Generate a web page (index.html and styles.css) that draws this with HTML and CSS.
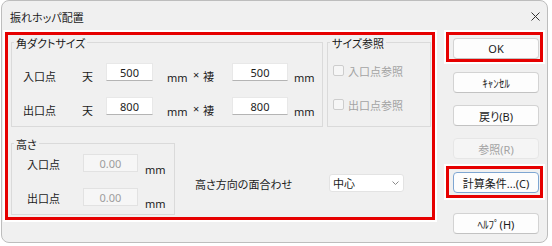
FILE: index.html
```html
<!DOCTYPE html>
<html lang="ja">
<head>
<meta charset="UTF-8">
<title>振れホッパ配置</title>
<link rel="stylesheet" href="styles.css">
</head>
<body>

<div class="window">
    <div class="titlebar">
        <span class="title">振れホッパ配置</span>
        <svg class="close" width="9" height="9" viewBox="0 0 9 9"><path d="M0.5 0.5L8.5 8.5M8.5 0.5L0.5 8.5" stroke="#333" stroke-width="1" fill="none"/></svg>
    </div>

    <div class="client">
        <div class="main">
            <div class="top">
                <div class="group duct">
                    <div class="group-title">角ダクトサイズ</div>
                    <div class="row">
                        <span class="lbl">入口点</span>
                        <span class="ten">天</span>
                        <input class="num w1" value="500">
                        <span class="unit u1">mm</span>
                        <span class="times">×</span>
                        <span class="tsuma">褄</span>
                        <input class="num w2" value="500">
                        <span class="unit u2">mm</span>
                    </div>
                    <div class="row">
                        <span class="lbl">出口点</span>
                        <span class="ten">天</span>
                        <input class="num w1" value="800">
                        <span class="unit u1">mm</span>
                        <span class="times">×</span>
                        <span class="tsuma">褄</span>
                        <input class="num w2" value="800">
                        <span class="unit u2">mm</span>
                    </div>
                </div>
                <div class="group ref">
                    <div class="group-title">サイズ参照</div>
                    <div class="chk"><span class="box"></span><span class="chk-text">入口点参照</span></div>
                    <div class="chk"><span class="box"></span><span class="chk-text">出口点参照</span></div>
                </div>
            </div>
            <div class="bottom">
                <div class="group height">
                    <div class="group-title">高さ</div>
                    <div class="hrow">
                        <span class="lbl">入口点</span>
                        <input class="num dis" value="0.00" disabled>
                        <span class="unit">mm</span>
                    </div>
                    <div class="hrow">
                        <span class="lbl">出口点</span>
                        <input class="num dis" value="0.00" disabled>
                        <span class="unit">mm</span>
                    </div>
                </div>
                <div class="align">
                    <span class="align-lbl">高さ方向の面合わせ</span>
                    <div class="select">
                        <span>中心</span>
                        <svg width="7" height="4" viewBox="0 0 7 4"><polyline points="0.5,0.5 3.5,3.5 6.5,0.5" stroke="#8a8a8a" stroke-width="1" fill="none"/></svg>
                    </div>
                </div>
            </div>
        </div>

        <div class="buttons">
            <div class="mark mark-ok"><button class="btn">OK</button></div>
            <button class="btn plain cancel">ｷｬﾝｾﾙ</button>
            <button class="btn plain back">戻り(B)</button>
            <button class="btn plain disabled refbtn" disabled>参照(R)</button>
            <div class="mark mark-calc"><button class="btn focus">計算条件...(C)</button></div>
            <button class="btn plain help">ﾍﾙﾌﾟ(H)</button>
        </div>
    </div>
</div>

</body>
</html>
```

FILE: styles.css
```css
body { margin: 0; background: #fff; font-family: "Noto Sans", "Noto Sans CJK JP", sans-serif; font-size: 11px; color: #1b1b1b; font-feature-settings: "palt"; }

.window { box-sizing: border-box; width: 547px; height: 243px; margin-left: 1px; border: 1px solid #bdbdbd; border-radius: 8px; background: #f0f0f0; overflow: hidden; }
.titlebar { display: flex; align-items: center; justify-content: space-between; height: 31px; padding: 0 7px 0 8px; }
.close { display: block; }

.client { display: flex; align-items: flex-start; padding-left: 3px; }
.main { box-sizing: border-box; width: 430px; height: 188px; border: 3px solid #e60000; box-shadow: 0 0 0 2px #fff; }

.top { display: flex; }
.group { box-sizing: border-box; border: 1px solid #dadada; }
.group-title { display: table; margin: -6px 0 0 2px; padding: 0 2px; line-height: 14px; background: #f0f0f0; }

.duct { margin: 7px 0 0 3px; width: 312px; height: 85px; }
.ref { margin: 7px 0 0 4px; width: 104px; height: 85px; }

.row { display: flex; align-items: flex-start; height: 18px; margin-top: 12px; line-height: 18px; }
.row + .row { margin-top: 16px; }
.row .lbl { margin: 5px 0 0 11px; width: 59px; }
.ten { width: 24px; margin-top: 5px; }
.unit { margin-top: 6px; }
.u1 { margin-left: 14px; width: 26px; }
.u2 { margin-left: 6px; }
.times { width: 10px; margin-top: 3px; }
.tsuma { width: 29px; margin-top: 5px; }

input.num { box-sizing: border-box; height: 18px; padding: 0; border: 1px solid #e8e8e8; border-bottom-color: #b4b4b4; background: #fff; font: inherit; line-height: 16px; text-align: center; color: #1b1b1b; }
.w1 { width: 47px; }
.w2 { width: 56px; }

.chk { display: flex; align-items: flex-start; margin: 10px 0 0 5px; color: #a3a3a3; }
.chk + .chk { margin-top: 14px; }
.box { box-sizing: border-box; width: 11px; height: 11px; margin: 4px 4px 0 0; border: 1px solid #cdcdcd; border-radius: 2px; background: #f6f6f6; }
.chk-text { padding-top: 2px; line-height: 18px; }

.bottom { display: flex; margin-top: 16px; }
.height { margin-left: 3px; width: 164px; height: 72px; }
.hrow { display: flex; align-items: flex-start; height: 18px; margin-top: 2px; line-height: 18px; }
.hrow + .hrow { margin-top: 16px; }
.hrow .lbl { margin: 2px 0 0 15px; width: 56px; }
.hrow .unit { margin: 7px 0 0 7px; }
input.dis { width: 55px; background: #f6f6f6; border-color: #e2e2e2; color: #9d9d9d; }

.align { display: flex; align-items: center; height: 18px; margin: 31px 0 0 20px; }
.align-lbl { width: 134px; padding-top: 1px; }
.select { box-sizing: border-box; display: flex; align-items: center; justify-content: space-between; width: 75px; height: 18px; padding: 0 4px 0 3px; background: #fff; border: 1px solid #e3e3e3; border-radius: 3px; }
.select svg { display: block; }

.buttons { margin-left: 11px; }
.mark { width: fit-content; border: 3px solid #e60000; box-shadow: 0 0 0 2px #fff; padding: 3px 1px 0 4px; }
.mark-calc { margin-top: 7px; padding-bottom: 2px; }
.btn { display: block; box-sizing: border-box; width: 86px; height: 21px; padding: 0; border: 1px solid #d3d3d3; border-bottom-color: #c2c2c2; border-radius: 4px; background: #fdfdfd; font: inherit; color: #1b1b1b; }
.plain { margin-left: 7px; }
.cancel { margin-top: 10px; }
.back { margin-top: 12px; }
.refbtn { margin-top: 12px; }
.disabled { background: #f5f5f5; border-color: #e6e6e6; color: #a3a3a3; }
.focus { border-color: #7ea6d2; }
.help { margin-top: 15px; }
```
